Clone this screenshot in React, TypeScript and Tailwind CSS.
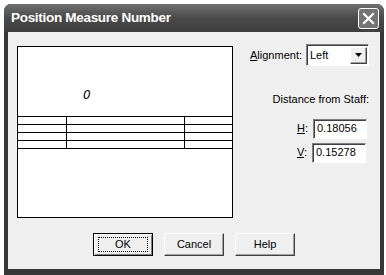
import React from 'react';

const ui = { fontFamily: '"Liberation Sans", Arial, sans-serif' };

function Raised({ children, focused }: { children: React.ReactNode; focused?: boolean }) {
  return (
    <div
      className={
        'w-[60px] h-[23px] bg-[#efefef] flex items-center justify-center text-[11px] text-black ' +
        (focused
          ? 'border border-black shadow-[inset_1px_1px_0_#ffffff,inset_-1px_-1px_0_#808080]'
          : 'border border-t-white border-l-white border-b-[#404040] border-r-[#404040] shadow-[inset_-1px_-1px_0_#a0a0a0]')
      }
    >
      {focused ? (
        <div className="w-[50px] h-[15px] border border-dotted border-black flex items-center justify-center">
          {children}
        </div>
      ) : (
        children
      )}
    </div>
  );
}

function Field({ label, value }: { label: string; value: string }) {
  return (
    <div className="flex items-center gap-[5px]">
      <span className="text-[11px]">
        <span className="underline">{label}</span>:
      </span>
      <div className="w-[54px] h-[20px] bg-white border border-t-[#808080] border-l-[#808080] border-b-white border-r-white shadow-[inset_1px_1px_0_#404040] flex items-center pl-[3px] text-[11px]">
        {value}
      </div>
    </div>
  );
}

function TableRow({ last }: { last?: boolean }) {
  return (
    <div className={'grid grid-cols-[48px_118px_1fr] h-[8px] border-t border-black ' + (last ? 'border-b h-[9px]' : '')}>
      <div />
      <div className="border-l border-black" />
      <div className="border-l border-black" />
    </div>
  );
}

export default function App() {
  return (
    <div className="w-[386px] h-[275px] bg-white overflow-hidden" style={ui}>
      <div className="ml-[4px] mt-[4px] w-[380px] h-[271px] rounded-t-[7px] bg-[#383838] flex flex-col">
        {/* title bar */}
        <div className="h-[28px] rounded-t-[7px] bg-gradient-to-b from-[#707070] via-[#4a4a4a] to-[#3e3e3e] flex items-center justify-between pl-[7px] pr-[5px]">
          <span className="text-white font-bold text-[13.5px] tracking-[-0.3px] mt-[1px]">Position Measure Number</span>
          <div className="w-[21px] h-[21px] rounded-[3px] border border-white bg-[#747474] flex items-center justify-center">
            <svg width="13" height="13" viewBox="0 0 13 13">
              <path d="M2 2 L11 11 M11 2 L2 11" stroke="#ffffff" strokeWidth="2.2" strokeLinecap="square" />
            </svg>
          </div>
        </div>

        {/* client area */}
        <div className="mx-[4px] mb-[6px] flex-1 bg-[#efefef] flex flex-col text-black">
          <div className="flex">
            {/* preview */}
            <div className="ml-[9px] mt-[14px] w-[216px] h-[172px] bg-white border border-black flex flex-col">
              <div className="h-[69px] pl-[65px] pt-[45px]">
                <span className="block italic text-[12px] leading-none -mt-[3px]" style={{ fontFamily: '"DejaVu Sans", sans-serif' }}>0</span>
              </div>
              <TableRow />
              <TableRow />
              <TableRow />
              <TableRow last />
            </div>

            {/* options */}
            <div className="flex-1 flex flex-col items-end pr-[11px] pt-[12px] text-[11px]">
              <div className="flex items-center gap-[4px]">
                <span>
                  <span className="underline">A</span>lignment:
                </span>
                <div className="w-[63px] h-[22px] bg-white border border-t-[#808080] border-l-[#808080] border-b-white border-r-white shadow-[inset_1px_1px_0_#404040] flex items-center justify-between pl-[3px] pr-[1px]">
                  <span>Left</span>
                  <div className="w-[17px] h-[17px] bg-[#efefef] border border-t-white border-l-white border-b-[#404040] border-r-[#404040] shadow-[inset_-1px_-1px_0_#a0a0a0] flex items-center justify-center">
                    <svg width="7" height="4" viewBox="0 0 7 4">
                      <path d="M0 0 H7 L3.5 4 Z" fill="#000" />
                    </svg>
                  </div>
                </div>
              </div>
              <div className="mt-[25px]">Distance from Staff:</div>
              <div className="mt-[11px] flex flex-col gap-[4px] mr-[2px]">
                <Field label="H" value="0.18056" />
                <Field label="V" value="0.15278" />
              </div>
            </div>
          </div>

          {/* buttons */}
          <div className="mt-[15px] flex justify-center gap-[11px]">
            <Raised focused>OK</Raised>
            <Raised>Cancel</Raised>
            <Raised>Help</Raised>
          </div>
        </div>
      </div>
    </div>
  );
}
